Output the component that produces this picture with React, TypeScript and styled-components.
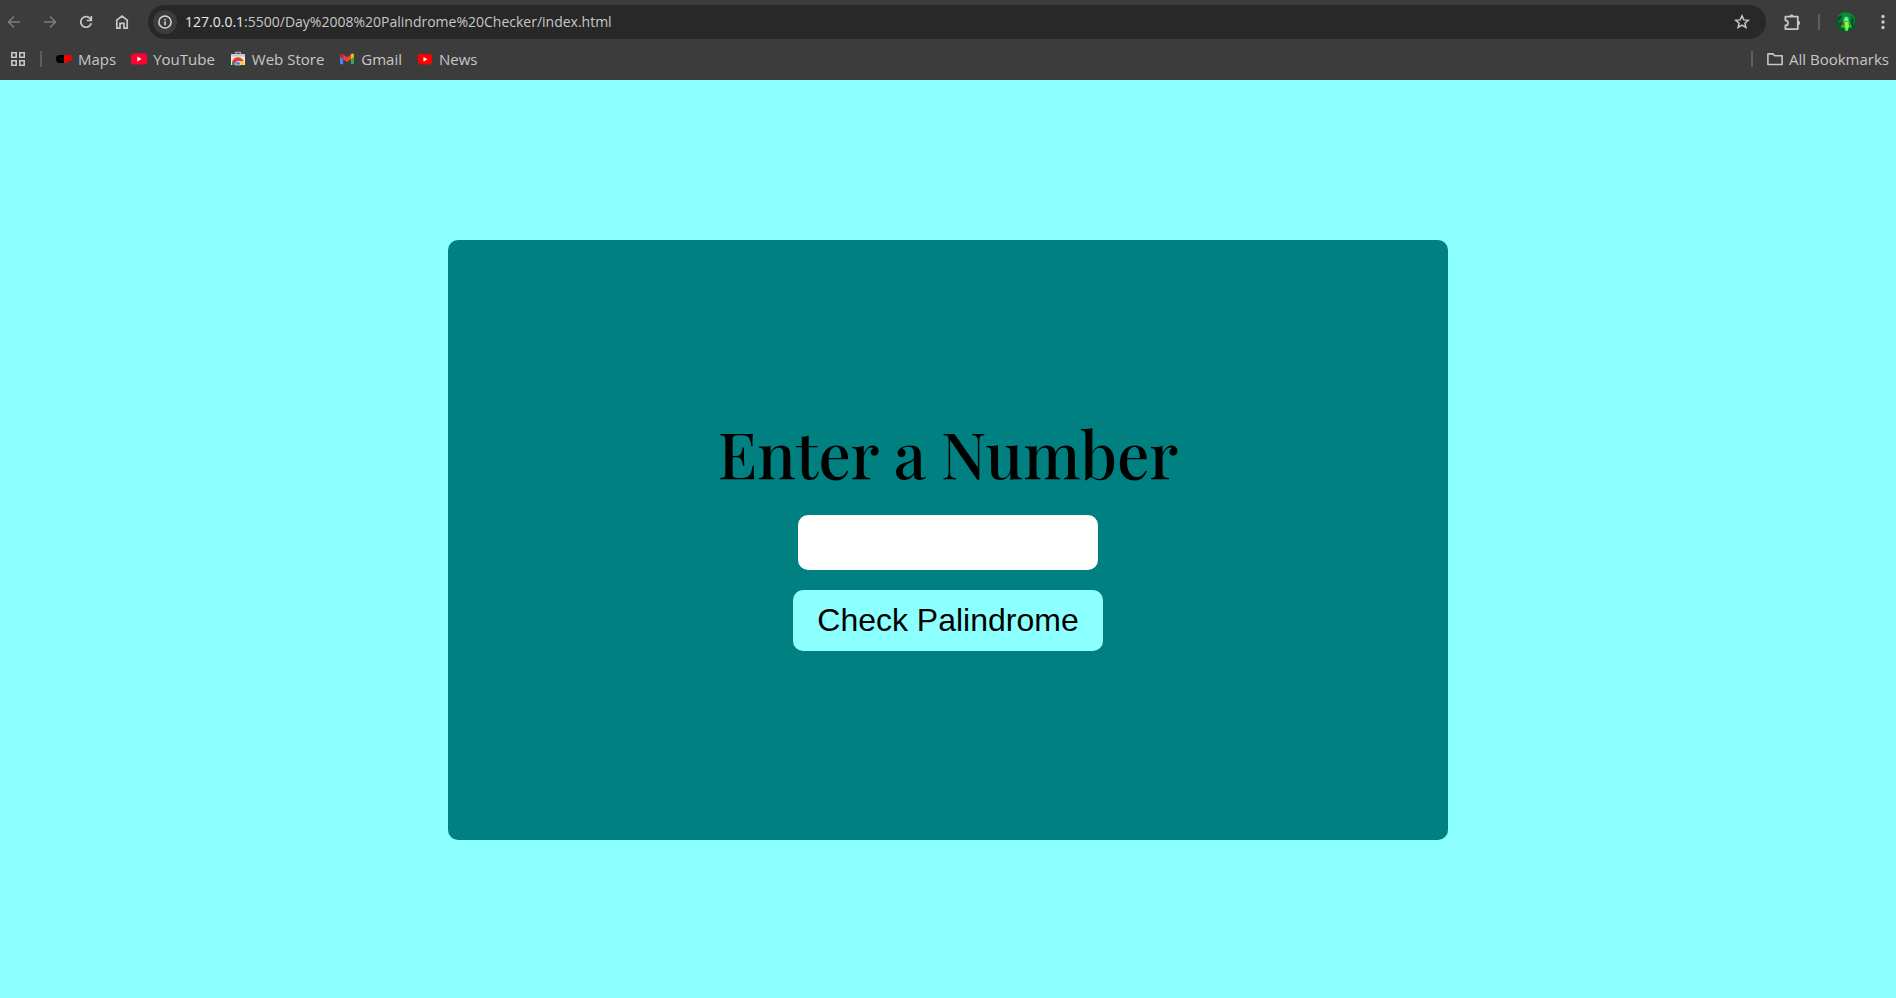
import React, { useState } from 'react';
import styled, { createGlobalStyle } from 'styled-components';

const GlobalStyle = createGlobalStyle`
  * { box-sizing: border-box; }
  html, body, #root { height: 100%; }
  body {
    margin: 0;
    font-family: 'Open Sans', 'Noto Sans', sans-serif;
  }
`;

const Page = styled.div`
  display: flex;
  flex-direction: column;
  min-height: 100%;
  background: #8cffff;
`;

const BrowserBar = styled.header`
  background: #3c3c3c;
  color: #c7c7c7;
  padding: 5px 0 7px;
`;

const Toolbar = styled.div`
  display: flex;
  align-items: center;
  height: 34px;
  padding-right: 2px;
`;

const IconButton = styled.button<{ $width?: number; $dim?: boolean }>`
  display: flex;
  align-items: center;
  justify-content: center;
  flex: none;
  width: ${({ $width = 36 }) => $width}px;
  height: 28px;
  padding: 0;
  border: 0;
  background: none;
  color: ${({ $dim }) => ($dim ? '#7d7d7d' : '#c7c7c7')};
`;

const NavButtons = styled.nav`
  display: flex;
  margin-left: -4px;
  margin-right: 8px;
`;

const AddressBar = styled.div`
  display: flex;
  flex: 1;
  align-items: center;
  min-width: 0;
  height: 34px;
  padding: 0 6px 0 5px;
  border-radius: 17px;
  background: #282828;
`;

const SiteInfo = styled.button`
  display: flex;
  align-items: center;
  justify-content: center;
  flex: none;
  width: 24px;
  height: 24px;
  padding: 0;
  border: 0;
  border-radius: 50%;
  background: #3c3c3c;
  color: #d6d6d6;
`;

const Url = styled.div`
  flex: 1;
  min-width: 0;
  margin-left: 8px;
  overflow: hidden;
  color: #c7c7c7;
  font-size: 14px;
  line-height: 20px;
  white-space: nowrap;
`;

const Host = styled.span`
  color: #e8e8e8;
`;

const Divider = styled.span`
  flex: none;
  width: 2px;
  height: 16px;
  background: #5e5e5e;
`;

const Actions = styled.div`
  display: flex;
  align-items: center;
  margin-left: 8px;
`;

const ExtensionGroup = styled.div`
  display: flex;
  align-items: center;
  gap: 8px;
`;

const Bookmarks = styled.nav`
  display: flex;
  align-items: center;
  height: 28px;
  margin-top: 6px;
  padding-right: 7px;
`;

const AppsGroup = styled.div`
  display: flex;
  align-items: center;
  gap: 4px;
`;

const BookmarkList = styled.div`
  display: flex;
  flex: 1;
  align-items: center;
  gap: 15px;
  margin-left: 14px;
`;

const Bookmark = styled.a`
  display: flex;
  align-items: center;
  gap: 6px;
  color: #c7c7c7;
  font-size: 15px;
  line-height: 20px;
  text-decoration: none;
  white-space: nowrap;
`;

const AllBookmarks = styled.div`
  display: flex;
  align-items: center;
  gap: 14px;
`;

const Icon = styled.svg`
  display: block;
  flex: none;
`;

const Main = styled.main`
  display: flex;
  flex: 1;
  align-items: center;
  justify-content: center;
  padding-top: 2px;
`;

const Card = styled.form`
  display: flex;
  flex-direction: column;
  align-items: center;
  justify-content: center;
  gap: 20px;
  width: 100%;
  max-width: 1000px;
  min-height: 600px;
  border-radius: 10px;
  background: #008080;
`;

const Title = styled.label`
  color: #000;
  font-family: 'Playfair Display', 'Liberation Serif', serif;
  font-size: 64px;
  font-weight: 500;
  line-height: 85px;
  text-align: center;
`;

const NumberInput = styled.input`
  width: 300px;
  height: 55px;
  padding: 10px;
  border: 0;
  border-radius: 10px;
  background: #fff;
  font-family: 'Liberation Sans', Arial, sans-serif;
  font-size: 32px;
  text-align: center;
`;

const CheckButton = styled.button`
  padding: 12px 24px;
  border: 0;
  border-radius: 10px;
  background: #8cffff;
  color: #000;
  font-family: 'Liberation Sans', Arial, sans-serif;
  font-size: 32px;
  line-height: 37px;
`;

const Result = styled.output`
  color: #000;
  font-size: 32px;
`;

const BackIcon = () => (
  <Icon width="16" height="16" viewBox="0 0 16 16" fill="none" stroke="currentColor" strokeWidth="1.6">
    <path d="M14 8H3M8 2.5 2.5 8 8 13.5" />
  </Icon>
);

const ForwardIcon = () => (
  <Icon width="16" height="16" viewBox="0 0 16 16" fill="none" stroke="currentColor" strokeWidth="1.6">
    <path d="M2 8h11M8 2.5 13.5 8 8 13.5" />
  </Icon>
);

const ReloadIcon = () => (
  <Icon width="16" height="16" viewBox="0 0 16 16" fill="none" stroke="currentColor" strokeWidth="1.7">
    <path d="M13.2 9.2A5.3 5.3 0 1 1 12 4.4L13.3 6" />
    <path d="M13.3 2v4.5H8.8" />
  </Icon>
);

const HomeIcon = () => (
  <Icon width="16" height="16" viewBox="0 0 16 16" fill="none" stroke="currentColor" strokeWidth="1.7">
    <path d="M2.8 6.2 8 2l5.2 4.2v8H10V9.3H6v4.9H2.8z" />
  </Icon>
);

const InfoIcon = () => (
  <Icon width="14" height="14" viewBox="0 0 14 14" fill="none" stroke="currentColor" strokeWidth="1.5">
    <circle cx="7" cy="7" r="6.1" />
    <path d="M7 6.2v4M7 3.7v1.5" />
  </Icon>
);

const StarIcon = () => (
  <Icon width="16" height="16" viewBox="0 0 16 16" fill="none" stroke="currentColor" strokeWidth="1.5">
    <path d="m8 1.9 1.8 4 4.4.4-3.3 2.9 1 4.3L8 11.2l-3.9 2.3 1-4.3-3.3-2.9 4.4-.4z" />
  </Icon>
);

const ExtensionIcon = () => (
  <Icon width="18" height="18" viewBox="0 0 18 18" fill="none" stroke="currentColor" strokeWidth="1.8" strokeLinejoin="round">
    <path d="M2.4 3.7h12.4v12.4H2.4v-3.6a2.6 2.6 0 0 0 0-5.2z" />
    <path fill="currentColor" stroke="none" d="M6.4 3.6a2.2 2.2 0 0 1 4.4 0zM15 7.7a2.2 2.2 0 0 1 0 4.4z" />
  </Icon>
);

const MoreIcon = () => (
  <Icon width="16" height="16" viewBox="0 0 16 16" fill="currentColor">
    <circle cx="8" cy="2.5" r="1.7" />
    <circle cx="8" cy="8" r="1.7" />
    <circle cx="8" cy="13.5" r="1.7" />
  </Icon>
);

const ProfileIcon = () => (
  <Icon width="20" height="20" viewBox="0 0 20 20">
    <circle cx="10" cy="10" r="10" fill="#08592a" />
    <path d="M2 4Q6-1 12 .5T19 7l-1 4-4-4-4-3-4 4-3 3z" fill="#0c8a35" />
    <path d="M2 5.5 5 3l1 2-3 4zM15 3l3 5-2 3z" fill="#05471e" />
    <path d="M8 5.5 10.5 4 13 6l1 4 2 6-3-1-1 4H9l-1-4-3 1 1.5-6z" fill="#28c848" />
    <path d="M9 10h3l1 4-2 5-2-4z" fill="#8df545" />
    <path d="M8.5 5.5H12V9H8.5z" fill="#6cf0b0" />
    <path d="M5.5 10.5 7.5 10l.5 4-1.5-1zM13 10l1 3-1 1z" fill="#a82c20" />
  </Icon>
);

const AppsIcon = () => (
  <Icon width="14" height="14" viewBox="0 0 14 14" fill="none" stroke="currentColor" strokeWidth="1.6">
    <path d="M.8.8h4.4v4.4H.8zM8.8.8h4.4v4.4H8.8zM.8 8.8h4.4v4.4H.8zM8.8 8.8h4.4v4.4H8.8z" />
  </Icon>
);

const MapsIcon = () => (
  <Icon width="16" height="16" viewBox="0 0 16 16">
    <path d="M8 4H3.5Q0 4 0 8t3.5 4H8z" fill="#000" />
    <path d="M8 4h5.5Q16 4 16 7q0 3-2.5 3h-2L11 12H8z" fill="#f00" />
    <path d="M3.5 7.3h3M5 9h3" stroke="#252525" strokeWidth=".8" />
    <path d="M11 7.3h2.5" stroke="#c90000" strokeWidth=".8" />
  </Icon>
);

const VideoIcon = () => (
  <Icon width="16" height="16" viewBox="0 0 16 16">
    <rect y="2.5" width="16" height="11" rx="2.6" fill="#ff0033" />
    <path d="m6.3 5.6 4.3 2.4-4.3 2.4z" fill="#fff" />
  </Icon>
);

const NewsIcon = () => (
  <Icon width="16" height="16" viewBox="0 0 16 16">
    <rect x="1" y="3" width="14" height="10.5" rx="2.3" fill="#f00" />
    <path d="m6.5 6 4 2.2-4 2.2z" fill="#fff" />
  </Icon>
);

const StoreIcon = () => (
  <Icon width="16" height="16" viewBox="0 0 16 16">
    <path d="M5.5 3.5v-2h5v2" fill="none" stroke="#9b9b9b" strokeWidth="1.3" />
    <path d="M1 3h14v11H1z" fill="#e9e9e9" />
    <path d="M1 3h14v2.5H1z" fill="#c8c8c8" />
    <path d="M2.2 14A6 6 0 0 1 13.5 10H8l-2 4z" fill="#e33b2e" />
    <path d="M2.2 14q-.3-2 .8-4l3 4z" fill="#2d9b4d" />
    <path d="M9.5 10h4q1 2 .3 4H9z" fill="#fdc92c" />
    <path d="M5.7 14a2.5 2.5 0 1 1 4.6 0z" fill="#3d7cf0" stroke="#fff" strokeWidth=".6" />
  </Icon>
);

const GmailIcon = () => (
  <Icon width="16" height="16" viewBox="0 0 16 16">
    <path d="M1 5v7.5q0 .8.8.8h2.4V7z" fill="#4285f4" />
    <path d="M15 5v7.5q0 .8-.8.8h-2.4V7z" fill="#34a853" />
    <path d="M4.2 4v4.2L1 5.8V4.3C1 2.6 2.7 2 4.2 3.2z" fill="#c5221f" />
    <path d="M11.8 4v4.2L15 5.8V4.3c0-1.7-1.7-2.3-3.2-1.1z" fill="#fbbc04" />
    <path d="M4.2 3.4 8 6.2l3.8-2.8v4.8L8 11 4.2 8.2z" fill="#ea4335" />
  </Icon>
);

const FolderIcon = () => (
  <Icon width="16" height="16" viewBox="0 0 16 16" fill="none" stroke="currentColor" strokeWidth="1.6" strokeLinejoin="round">
    <path d="M.9 2.9h5l1.8 1.9h7.4v8.7H.9z" />
  </Icon>
);

const bookmarks = [
  { label: 'Maps', icon: <MapsIcon /> },
  { label: 'YouTube', icon: <VideoIcon /> },
  { label: 'Web Store', icon: <StoreIcon /> },
  { label: 'Gmail', icon: <GmailIcon /> },
  { label: 'News', icon: <NewsIcon /> },
];

export default function App() {
  const [value, setValue] = useState('');
  const [result, setResult] = useState('');

  const check = (event: React.FormEvent) => {
    event.preventDefault();
    if (!value) return;
    const reversed = value.split('').reverse().join('');
    setResult(value === reversed ? 'Palindrome' : 'Not a palindrome');
  };

  return (
    <Page>
      <GlobalStyle />
      <BrowserBar>
        <Toolbar>
          <NavButtons>
            <IconButton $dim aria-label="Back"><BackIcon /></IconButton>
            <IconButton $dim aria-label="Forward"><ForwardIcon /></IconButton>
            <IconButton aria-label="Reload"><ReloadIcon /></IconButton>
            <IconButton aria-label="Home"><HomeIcon /></IconButton>
          </NavButtons>
          <AddressBar>
            <SiteInfo aria-label="Site information"><InfoIcon /></SiteInfo>
            <Url><Host>127.0.0.1</Host>:5500/Day%2008%20Palindrome%20Checker/index.html</Url>
            <IconButton aria-label="Bookmark this page"><StarIcon /></IconButton>
          </AddressBar>
          <Actions>
            <ExtensionGroup>
              <IconButton aria-label="Extensions"><ExtensionIcon /></IconButton>
              <Divider />
            </ExtensionGroup>
            <IconButton $width={52} aria-label="Profile"><ProfileIcon /></IconButton>
            <IconButton $width={22} aria-label="More"><MoreIcon /></IconButton>
          </Actions>
        </Toolbar>
        <Bookmarks>
          <AppsGroup>
            <IconButton aria-label="Apps"><AppsIcon /></IconButton>
            <Divider />
          </AppsGroup>
          <BookmarkList>
            {bookmarks.map(({ label, icon }) => (
              <Bookmark key={label} href="#">{icon}{label}</Bookmark>
            ))}
          </BookmarkList>
          <AllBookmarks>
            <Divider />
            <Bookmark href="#"><FolderIcon />All Bookmarks</Bookmark>
          </AllBookmarks>
        </Bookmarks>
      </BrowserBar>
      <Main>
        <Card onSubmit={check}>
          <Title htmlFor="number">Enter a Number</Title>
          <NumberInput id="number" value={value} onChange={(e) => setValue(e.target.value)} />
          <CheckButton type="submit">Check Palindrome</CheckButton>
          <Result htmlFor="number">{result}</Result>
        </Card>
      </Main>
    </Page>
  );
}
